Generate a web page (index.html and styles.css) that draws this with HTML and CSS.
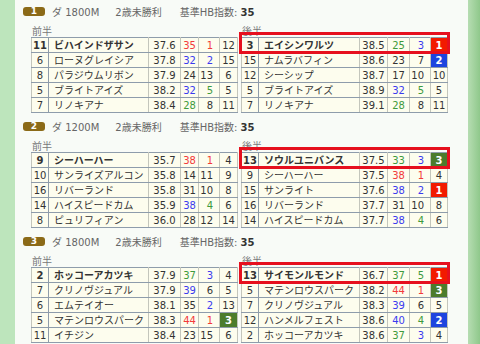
FILE: index.html
```html
<!DOCTYPE html>
<html lang="ja">
<head>
<meta charset="utf-8">
<link rel="stylesheet" href="styles.css">
</head>
<body>
<div class="page">
  <div class="side-l"></div>
  <div class="main">

    <section class="race">
      <div class="head"><span class="no">1</span><span class="course">ダ 1800M</span><span class="cls">2歳未勝利</span><span class="hb">基準HB指数: <b>35</b></span></div>
      <div class="halves">
        <div class="half early">
          <div class="lbl">前半</div>
          <table>
            <colgroup><col class="c1"><col class="c2"><col class="c3"><col class="c4"><col class="c5"><col class="c6"></colgroup>
            <tr class="top"><td class="n">11</td><td class="nm">ビハインドザサン</td><td class="t">37.6</td><td class="p r">35</td><td class="k r">1</td><td class="z">12</td></tr>
            <tr><td class="n">6</td><td class="nm">ローヌグレイシア</td><td class="t">37.8</td><td class="p b">32</td><td class="k b">2</td><td class="z">15</td></tr>
            <tr><td class="n">8</td><td class="nm">パラジウムリボン</td><td class="t">37.9</td><td class="p">24</td><td class="k">13</td><td class="z">6</td></tr>
            <tr><td class="n">5</td><td class="nm">ブライトアイズ</td><td class="t">38.2</td><td class="p b">32</td><td class="k g">5</td><td class="z">5</td></tr>
            <tr><td class="n">7</td><td class="nm">リノキアナ</td><td class="t">38.4</td><td class="p g">28</td><td class="k">8</td><td class="z">11</td></tr>
          </table>
        </div>
        <div class="half late">
          <div class="lbl">後半</div>
          <table>
            <colgroup><col class="c1"><col class="c2"><col class="c3"><col class="c4"><col class="c5"><col class="c6"></colgroup>
            <tr class="top"><td class="n">3</td><td class="nm">エイシンワルツ</td><td class="t">38.5</td><td class="p g">25</td><td class="k b">3</td><td class="z bg-r">1</td></tr>
            <tr><td class="n">15</td><td class="nm">ナムラバフィン</td><td class="t">38.6</td><td class="p">23</td><td class="k">7</td><td class="z bg-b">2</td></tr>
            <tr><td class="n">12</td><td class="nm">シーシップ</td><td class="t">38.7</td><td class="p">17</td><td class="k">10</td><td class="z">10</td></tr>
            <tr><td class="n">5</td><td class="nm">ブライトアイズ</td><td class="t">38.9</td><td class="p b">32</td><td class="k g">5</td><td class="z">5</td></tr>
            <tr><td class="n">7</td><td class="nm">リノキアナ</td><td class="t">39.1</td><td class="p g">28</td><td class="k">8</td><td class="z">11</td></tr>
          </table>
          <div class="mark"></div>
        </div>
      </div>
    </section>

    <section class="race">
      <div class="head"><span class="no">2</span><span class="course">ダ 1200M</span><span class="cls">2歳未勝利</span><span class="hb">基準HB指数: <b>35</b></span></div>
      <div class="halves">
        <div class="half early">
          <div class="lbl">前半</div>
          <table>
            <colgroup><col class="c1"><col class="c2"><col class="c3"><col class="c4"><col class="c5"><col class="c6"></colgroup>
            <tr class="top"><td class="n">9</td><td class="nm">シーハーハー</td><td class="t">35.7</td><td class="p r">38</td><td class="k r">1</td><td class="z">4</td></tr>
            <tr><td class="n">10</td><td class="nm">サンライズアルコン</td><td class="t">35.8</td><td class="p">14</td><td class="k">11</td><td class="z">9</td></tr>
            <tr><td class="n">16</td><td class="nm">リバーランド</td><td class="t">35.8</td><td class="p">31</td><td class="k">10</td><td class="z">8</td></tr>
            <tr><td class="n">14</td><td class="nm">ハイスピードカム</td><td class="t">35.9</td><td class="p b">38</td><td class="k g">4</td><td class="z">6</td></tr>
            <tr><td class="n">8</td><td class="nm">ピュリフィアン</td><td class="t">36.0</td><td class="p">28</td><td class="k">12</td><td class="z">14</td></tr>
          </table>
        </div>
        <div class="half late">
          <div class="lbl">後半</div>
          <table>
            <colgroup><col class="c1"><col class="c2"><col class="c3"><col class="c4"><col class="c5"><col class="c6"></colgroup>
            <tr class="top"><td class="n">13</td><td class="nm">ソウルユニバンス</td><td class="t">37.5</td><td class="p g">33</td><td class="k b">3</td><td class="z bg-g">3</td></tr>
            <tr><td class="n">9</td><td class="nm">シーハーハー</td><td class="t">37.5</td><td class="p r">38</td><td class="k r">1</td><td class="z">4</td></tr>
            <tr><td class="n">15</td><td class="nm">サンライト</td><td class="t">37.6</td><td class="p b">38</td><td class="k b">2</td><td class="z bg-r">1</td></tr>
            <tr><td class="n">16</td><td class="nm">リバーランド</td><td class="t">37.7</td><td class="p">31</td><td class="k">10</td><td class="z">8</td></tr>
            <tr><td class="n">14</td><td class="nm">ハイスピードカム</td><td class="t">37.7</td><td class="p b">38</td><td class="k g">4</td><td class="z">6</td></tr>
          </table>
          <div class="mark"></div>
        </div>
      </div>
    </section>

    <section class="race">
      <div class="head"><span class="no">3</span><span class="course">ダ 1800M</span><span class="cls">2歳未勝利</span><span class="hb">基準HB指数: <b>35</b></span></div>
      <div class="halves">
        <div class="half early">
          <div class="lbl">前半</div>
          <table>
            <colgroup><col class="c1"><col class="c2"><col class="c3"><col class="c4"><col class="c5"><col class="c6"></colgroup>
            <tr class="top"><td class="n">2</td><td class="nm">ホッコーアカツキ</td><td class="t">37.9</td><td class="p g">37</td><td class="k b">3</td><td class="z">4</td></tr>
            <tr><td class="n">7</td><td class="nm">クリノヴジュアル</td><td class="t">37.9</td><td class="p b">39</td><td class="k">6</td><td class="z">5</td></tr>
            <tr><td class="n">6</td><td class="nm">エムテイオー</td><td class="t">38.1</td><td class="p">35</td><td class="k b">2</td><td class="z">13</td></tr>
            <tr><td class="n">5</td><td class="nm">マテンロウスパーク</td><td class="t">38.3</td><td class="p r">44</td><td class="k r">1</td><td class="z bg-g">3</td></tr>
            <tr><td class="n">11</td><td class="nm">イチジン</td><td class="t">38.4</td><td class="p">23</td><td class="k">15</td><td class="z">6</td></tr>
          </table>
        </div>
        <div class="half late">
          <div class="lbl">後半</div>
          <table>
            <colgroup><col class="c1"><col class="c2"><col class="c3"><col class="c4"><col class="c5"><col class="c6"></colgroup>
            <tr class="top"><td class="n">13</td><td class="nm">サイモンルモンド</td><td class="t">36.7</td><td class="p g">37</td><td class="k g">5</td><td class="z bg-r">1</td></tr>
            <tr><td class="n">5</td><td class="nm">マテンロウスパーク</td><td class="t">38.2</td><td class="p r">44</td><td class="k r">1</td><td class="z bg-g">3</td></tr>
            <tr><td class="n">7</td><td class="nm">クリノヴジュアル</td><td class="t">38.3</td><td class="p b">39</td><td class="k">6</td><td class="z">5</td></tr>
            <tr><td class="n">12</td><td class="nm">ハンメルフェスト</td><td class="t">38.6</td><td class="p b">40</td><td class="k g">4</td><td class="z bg-b">2</td></tr>
            <tr><td class="n">2</td><td class="nm">ホッコーアカツキ</td><td class="t">38.6</td><td class="p g">37</td><td class="k b">3</td><td class="z">4</td></tr>
          </table>
          <div class="mark"></div>
        </div>
      </div>
    </section>

  </div>
  <div class="side-r"></div>
</div>
</body>
</html>
```

FILE: styles.css
```css
* { box-sizing: border-box; }
html, body { margin: 0; padding: 0; }
body {
  width: 480px;
  height: 344px;
  overflow: hidden;
  font-family: "DejaVu Sans", "Noto Sans CJK JP", sans-serif;
  font-size: 10px;
  color: #333;
}
.page { display: flex; height: 344px; }
.side-l { width: 15px; background: #bde5bc; }
.main { flex: 1; background: #f8fbf7; padding-left: 8px; }
.side-r { width: 12px; background: linear-gradient(to right, #b6ddb2, #8fc88b); }

.race { height: 115px; padding-top: 7px; }
.head { display: flex; align-items: center; height: 9px; color: #666; white-space: nowrap; }
.no {
  width: 22px; height: 9px;
  background: #8b6a18;
  border-radius: 3px;
  color: #fff;
  font-weight: bold;
  font-size: 9px;
  line-height: 9px;
  text-align: center;
}
.course { margin-left: 7px; }
.cls { margin-left: 16px; }
.hb { margin-left: 18px; }
.hb b { color: #333; }

.halves { display: flex; gap: 4px; margin-top: 10px; padding-left: 8px; }
.half { position: relative; width: 206px; }
.lbl { height: 11px; line-height: 11px; color: #777; padding-left: 1px; }

table {
  width: 206px;
  border-collapse: collapse;
  table-layout: fixed;
  background: #fdfdee;
  border: 1px solid #7d8b99;
}
td {
  height: 15px;
  padding: 0;
  line-height: 13px;
  white-space: nowrap;
  overflow: hidden;
  border-top: 1px solid #8e9cab;
  border-bottom: 1px solid #8e9cab;
  border-left: 1px solid #c4c6bc;
  border-right: 1px solid #c4c6bc;
}
.early .c1 { width: 17px; } .early .c2 { width: 100px; } .early .c3 { width: 32px; }
.early .c4 { width: 18px; } .early .c5 { width: 21px; } .early .c6 { width: 18px; }
.late .c1 { width: 17px; } .late .c2 { width: 101px; } .late .c3 { width: 28px; }
.late .c4 { width: 22px; } .late .c5 { width: 21px; } .late .c6 { width: 17px; }

td.n { text-align: center; border-right-color: #8e9cab; }
td.nm { padding-left: 5px; }
td.t, td.p, td.z { text-align: center; }
td.k { text-align: right; padding-right: 6px; }
tr.top td.n, tr.top td.nm { font-weight: bold; }

.r { color: #f23a3a; }
.b { color: #3b3bee; }
.g { color: #3d9a3d; }
td.bg-r { background: #f21a00; color: #fff; font-weight: bold; }
td.bg-b { background: #1d44df; color: #fff; font-weight: bold; }
td.bg-g { background: #4c7c2c; color: #fff; font-weight: bold; }

.mark {
  position: absolute;
  left: -2px;
  top: 6px;
  width: 211px;
  height: 22px;
  border: 3px solid #e6101e;
}
```
